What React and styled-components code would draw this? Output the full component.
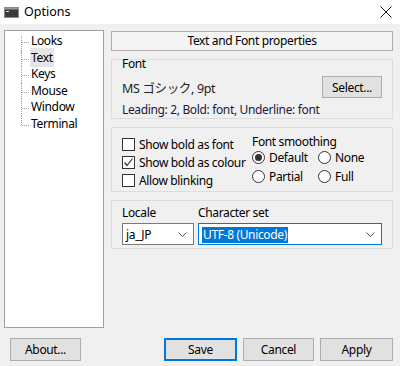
import styled, { createGlobalStyle } from 'styled-components'

const Global = createGlobalStyle`
  html, body {
    margin: 0;
    padding: 0;
    background: #f0f0f0;
  }
  body {
    font-family: "Noto Sans", "Noto Sans CJK JP", sans-serif;
    font-size: 12px;
    letter-spacing: -0.35px;
    color: #000;
    white-space: nowrap;
  }
`

const Window = styled.div`
  width: 400px;
  height: 366px;
  display: flex;
  flex-direction: column;
  background: #f0f0f0;
  overflow: hidden;
`

const TitleBar = styled.div`
  height: 24px;
  background: #fff;
  display: flex;
  align-items: center;
  padding: 0 8px 0 4px;
  gap: 5px;
`

const Title = styled.div`
  flex: 1;
  font-size: 12.5px;
  letter-spacing: 0;
  line-height: 24px;
`

const Body = styled.div`
  flex: 1;
  display: flex;
  flex-direction: column;
  padding: 6px 7px 6px 4px;
`

const Main = styled.div`
  display: flex;
  gap: 7px;
`

const Tree = styled.div`
  width: 102px;
  height: 298px;
  box-sizing: border-box;
  background: #fff;
  border: 1px solid #a0a0a0;
  padding: 2px 0 0 16px;
`

const TreeItem = styled.div`
  position: relative;
  height: 16.6px;
  line-height: 16.6px;
  padding-left: 9px;

  &::before {
    content: '';
    position: absolute;
    left: 0;
    top: ${p => (p.$first ? '3px' : '0')};
    height: ${p => (p.$last ? '9px' : '100%')};
    border-left: 1px dotted #a0a0a0;
  }
  &::after {
    content: '';
    position: absolute;
    left: 1px;
    top: 9px;
    width: 7px;
    border-top: 1px dotted #a0a0a0;
  }
`

const TreeLabel = styled.span`
  padding: 1px 1px;
  background: ${p => (p.$selected ? '#e5e5e5' : 'transparent')};
`

const Panel = styled.div`
  flex: 1;
  display: flex;
  flex-direction: column;
  padding-top: 1px;
`

const Header = styled.div`
  height: 18px;
  line-height: 18px;
  text-align: center;
  border: 1px solid #adadad;
  background: #f4f4f4;
`

const Group = styled.div`
  margin-top: 8px;
  height: ${p => p.$h}px;
  box-sizing: border-box;
  border: 1px solid #dcdcdc;
  padding: ${p => p.$pad || '0 10px'};
  display: flex;
  flex-direction: ${p => (p.$row ? 'row' : 'column')};
  gap: ${p => p.$gap || 0}px;
`

const GroupLabel = styled.div`
  height: ${p => p.$h || 16}px;
  line-height: ${p => p.$h || 16}px;
`

const FontRow = styled.div`
  display: flex;
  align-items: center;
  justify-content: space-between;
  margin-top: 8px;
`

const FontName = styled.div`
  font-size: 12.5px;
  color: #222;
`

const Button = styled.div`
  width: ${p => p.$w || 72}px;
  height: ${p => p.$h || 21}px;
  box-sizing: border-box;
  border: 1px solid ${p => (p.$default ? '#0078d7' : '#adadad')};
  box-shadow: ${p => (p.$default ? 'inset 0 0 0 1px #0078d7' : 'none')};
  background: #e1e1e1;
  display: flex;
  align-items: center;
  justify-content: center;
`

const InfoLine = styled.div`
  margin-top: 4px;
  height: 16px;
  line-height: 16px;
  color: #1b1b3a;
`

const Column = styled.div`
  display: flex;
  flex-direction: column;
  width: ${p => p.$w || 'auto'};
  flex-shrink: 0;
`

const Check = styled.div`
  display: flex;
  align-items: center;
  height: 18px;
  gap: 4px;
`

const Box = styled.span`
  width: 13px;
  height: 13px;
  box-sizing: border-box;
  border: 1px solid #333;
  background: #fff;
  display: inline-flex;
  align-items: center;
  justify-content: center;
`

const RadioGrid = styled.div`
  display: grid;
  grid-template-columns: 66px auto;
`

const Radio = styled.div`
  display: flex;
  align-items: center;
  height: 19px;
  gap: 4px;
`

const Circle = styled.span`
  width: 13px;
  height: 13px;
  box-sizing: border-box;
  border-radius: 50%;
  border: 1px solid #333;
  background: #fff;
  display: inline-flex;
  align-items: center;
  justify-content: center;

  &::after {
    content: '';
    width: 7px;
    height: 7px;
    border-radius: 50%;
    background: ${p => (p.$on ? '#333' : 'transparent')};
  }
`

const Combo = styled.div`
  width: ${p => p.$w}px;
  height: 22px;
  margin-top: 2px;
  box-sizing: border-box;
  border: 1px solid ${p => (p.$focus ? '#0078d7' : '#7a7a7a')};
  background: #fff;
  display: flex;
  align-items: center;
  padding: 0 6px 0 3px;
`

const ComboText = styled.span`
  flex: 1;
`

const Selected = styled.span`
  background: #0078d7;
  color: #fff;
  padding: 0 1px;
  line-height: 16px;
  display: inline-block;
`

const Footer = styled.div`
  display: flex;
  align-items: center;
  margin-top: 10px;
  padding-left: 6px;
  gap: 6px;
`

const Spacer = styled.div`
  flex: 1;
`

const Chevron = () => (
  <svg width="9" height="5" viewBox="0 0 9 5">
    <path d="M0.5 0.5 L4.5 4.5 L8.5 0.5" fill="none" stroke="#555" strokeWidth="1" />
  </svg>
)

const Tick = () => (
  <svg width="11" height="11" viewBox="0 0 11 11">
    <path d="M1.5 5.5 L4 8.5 L9.5 1.5" fill="none" stroke="#333" strokeWidth="1.2" />
  </svg>
)

const App = () => {
  const items = ['Looks', 'Text', 'Keys', 'Mouse', 'Window', 'Terminal']
  return (
    <Window>
      <Global />
      <TitleBar>
        <svg width="15" height="11" viewBox="0 0 15 11">
          <rect x="0.5" y="0.5" width="14" height="10" fill="#3a3a3a" stroke="#8a8a8a" />
          <rect x="1" y="1" width="13" height="1.5" fill="#9a9a9a" />
          <rect x="2" y="4" width="3" height="1" fill="#ddd" />
        </svg>
        <Title>Options</Title>
        <svg width="12" height="12" viewBox="0 0 12 12">
          <path d="M0.5 0.5 L11.5 11.5 M11.5 0.5 L0.5 11.5" stroke="#111" strokeWidth="1" />
        </svg>
      </TitleBar>
      <Body>
        <Main>
          <Tree>
            {items.map((t, i) => (
              <TreeItem key={t} $first={i === 0} $last={i === items.length - 1}>
                <TreeLabel $selected={t === 'Text'}>{t}</TreeLabel>
              </TreeItem>
            ))}
          </Tree>
          <Panel>
            <Header>Text and Font properties</Header>
            <Group $h={60} $pad="0 10px">
              <GroupLabel $h={8}>Font</GroupLabel>
              <FontRow>
                <FontName>MS ゴシック, 9pt</FontName>
                <Button $w={60} $h={22}>Select...</Button>
              </FontRow>
              <InfoLine>Leading: 2, Bold: font, Underline: font</InfoLine>
            </Group>
            <Group $row $h={65} $pad="7px 10px 0">
              <Column $w="130px">
                <Check><Box /> Show bold as font</Check>
                <Check><Box><Tick /></Box> Show bold as colour</Check>
                <Check><Box /> Allow blinking</Check>
              </Column>
              <Column>
                <GroupLabel $h={13}>Font smoothing</GroupLabel>
                <RadioGrid>
                  <Radio><Circle $on />Default</Radio>
                  <Radio><Circle />None</Radio>
                  <Radio><Circle />Partial</Radio>
                  <Radio><Circle />Full</Radio>
                </RadioGrid>
              </Column>
            </Group>
            <Group $row $h={49} $pad="4px 10px 0" $gap={4}>
              <Column>
                <GroupLabel>Locale</GroupLabel>
                <Combo $w={72}>
                  <ComboText>ja_JP</ComboText>
                  <Chevron />
                </Combo>
              </Column>
              <Column>
                <GroupLabel>Character set</GroupLabel>
                <Combo $w={184} $focus>
                  <ComboText><Selected>UTF-8 (Unicode)</Selected></ComboText>
                  <Chevron />
                </Combo>
              </Column>
            </Group>
          </Panel>
        </Main>
        <Footer>
          <Button $w={71} $h={23}>About...</Button>
          <Spacer />
          <Button $w={73} $h={23} $default>Save</Button>
          <Button $w={71} $h={23}>Cancel</Button>
          <Button $w={73} $h={23}>Apply</Button>
        </Footer>
      </Body>
    </Window>
  )
}

export default App
